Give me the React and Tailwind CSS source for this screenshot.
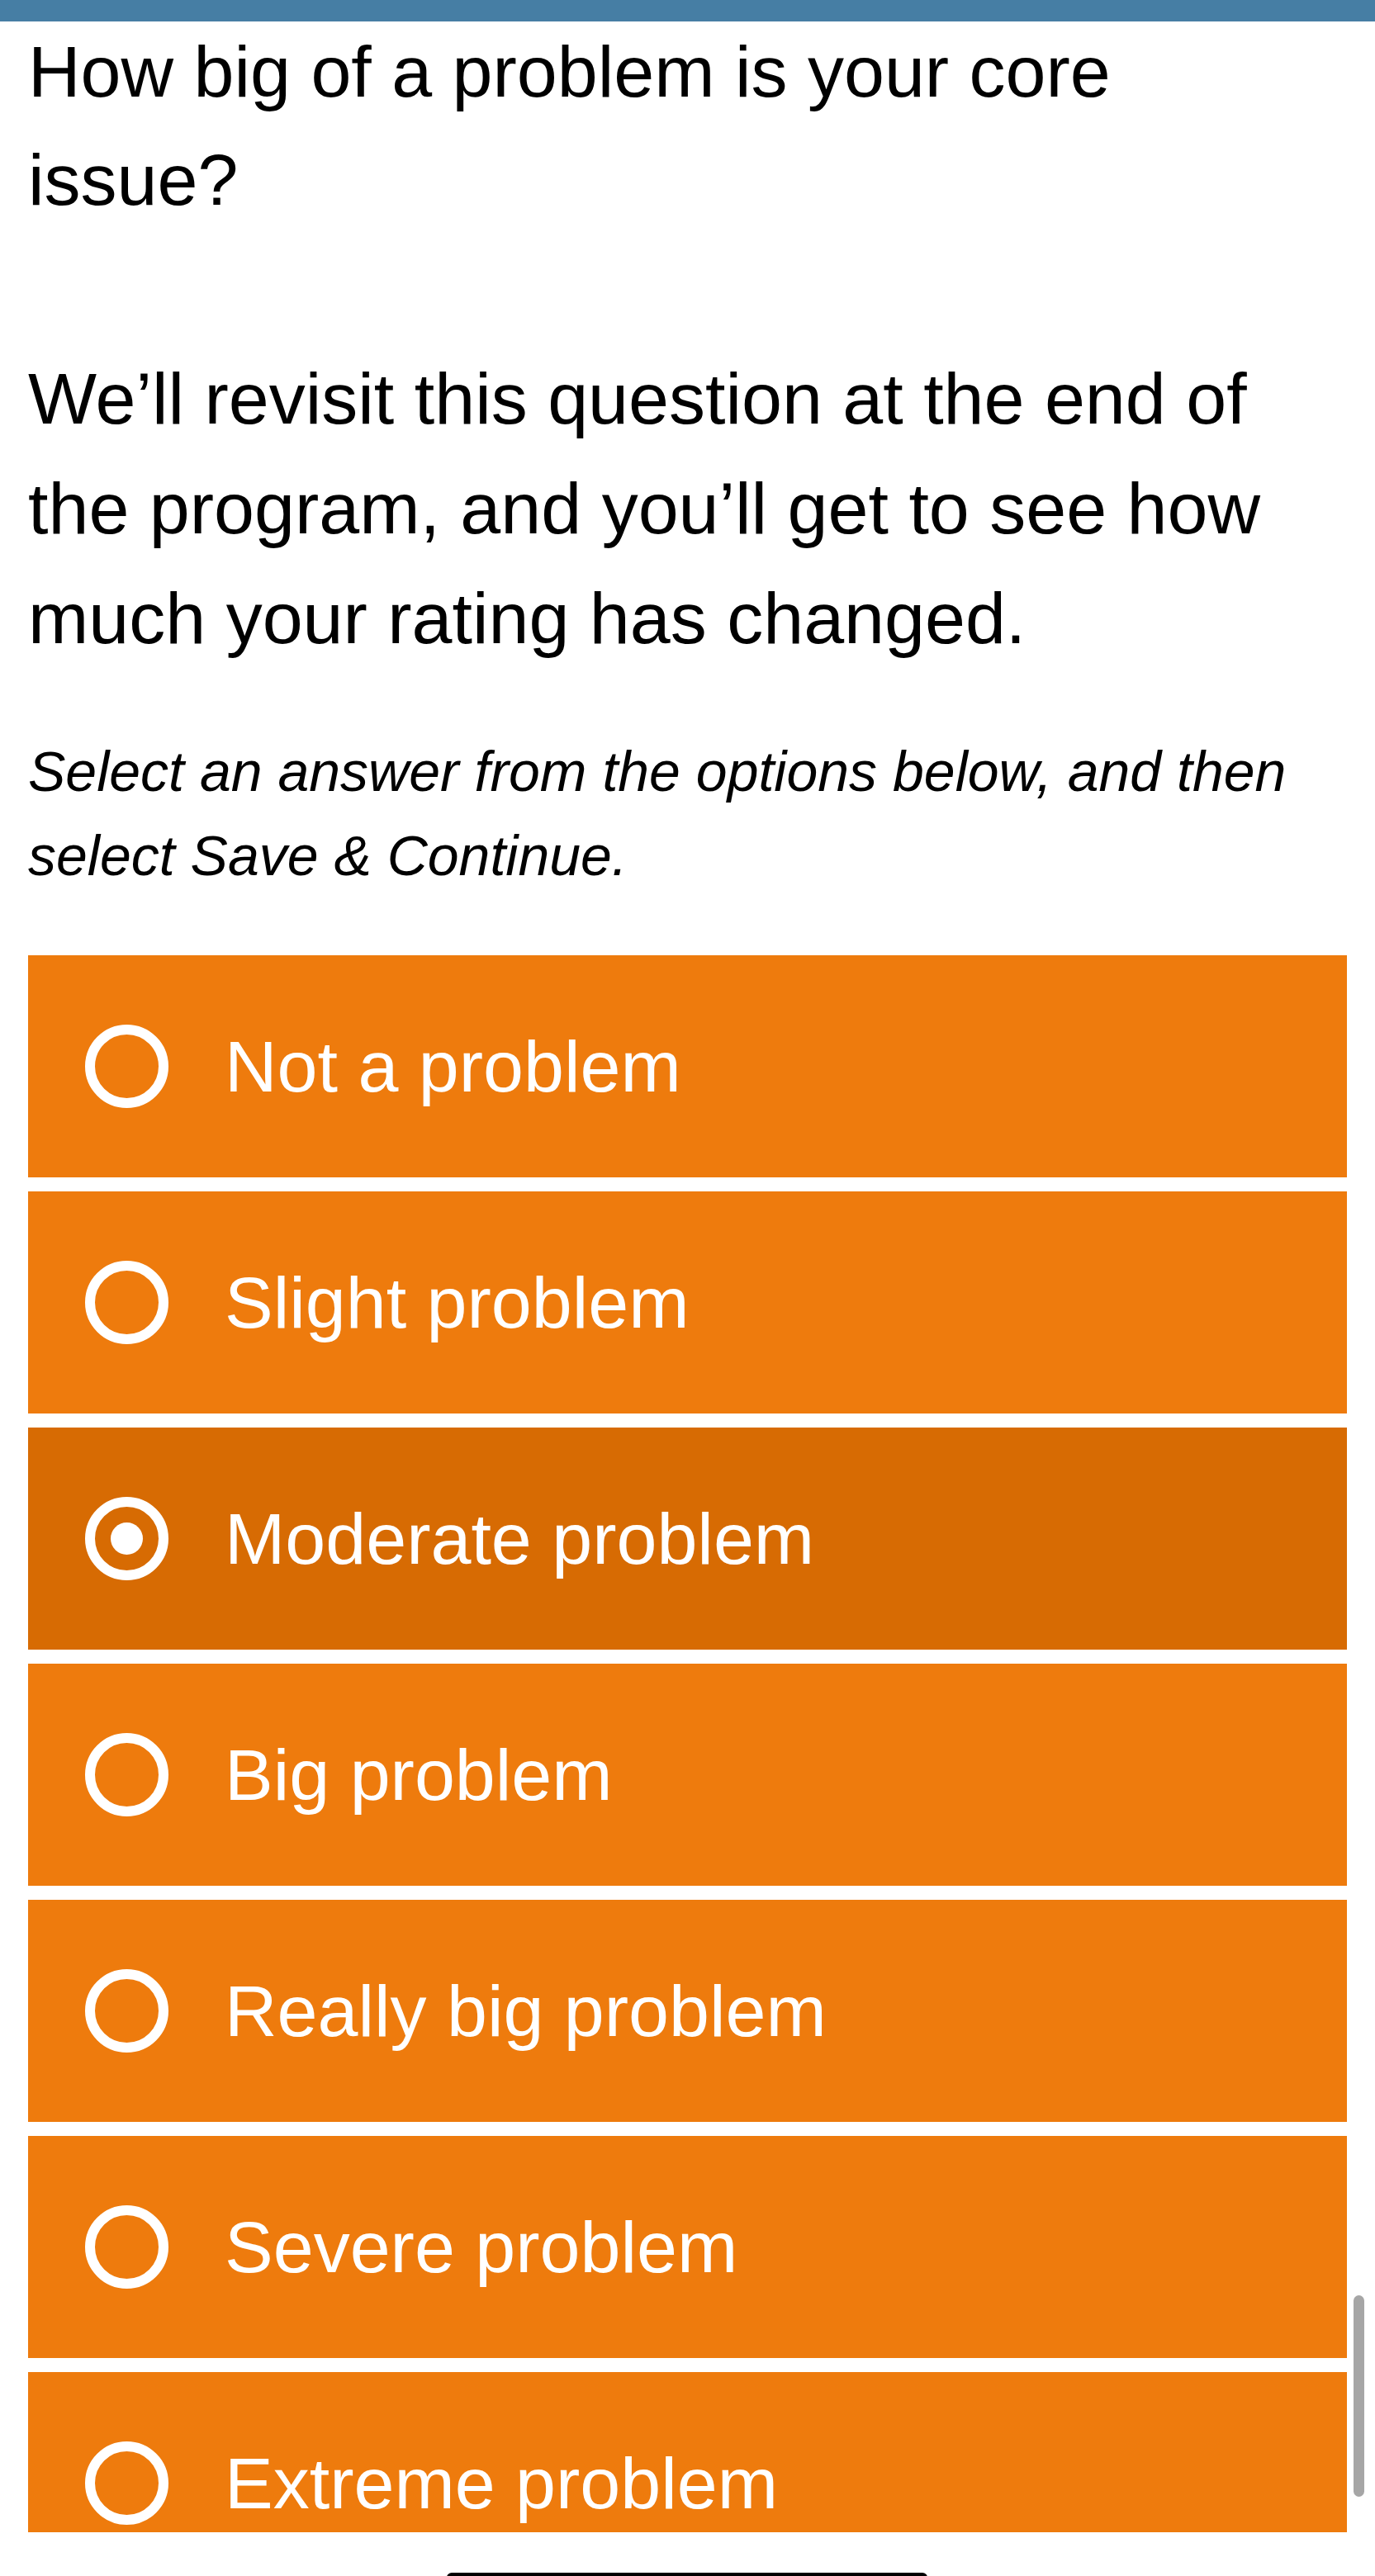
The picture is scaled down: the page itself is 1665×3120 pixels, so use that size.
import React from "react";

const options = [
  { label: "Not a problem", selected: false },
  { label: "Slight problem", selected: false },
  { label: "Moderate problem", selected: true },
  { label: "Big problem", selected: false },
  { label: "Really big problem", selected: false },
  { label: "Severe problem", selected: false },
  { label: "Extreme problem", selected: false },
];

function Radio({ selected }) {
  return (
    <div className="w-[101px] h-[101px] shrink-0 rounded-full border-[12px] border-white flex items-center justify-center">
      {selected && <div className="w-[39px] h-[39px] rounded-full bg-white" />}
    </div>
  );
}

export default function App() {
  return (
    <div
      className="relative w-[1665px] h-[3120px] overflow-hidden bg-white text-black"
      style={{ fontFamily: '"Liberation Sans", Arial, Helvetica, sans-serif' }}
    >
      <div className="h-[3067px] overflow-hidden flex flex-col">
        <div className="h-[26px] shrink-0 bg-[#467ea4] relative z-10" />
        <div className="px-[34px] flex flex-col">
          <h1 className="mt-[-5px] w-[1560px] text-[88px] leading-[131px] font-normal">
            How big of a problem is your core issue?
          </h1>
          <p className="mt-[133px] w-[1560px] text-[88px] leading-[133px]">
            We’ll revisit this question at the end of the program, and you’ll get to see how much your rating has changed.
          </p>
          <p className="mt-[68px] w-[1560px] text-[68px] leading-[102px] italic">
            Select an answer from the options below, and then select Save &amp; Continue.
          </p>
          <div className="mt-[70px] flex flex-col gap-[17px]">
            {options.map((o) => (
              <div
                key={o.label}
                className={
                  "h-[269px] shrink-0 flex items-center pl-[69px] gap-[68px] text-white " +
                  (o.selected ? "bg-[#d76b03]" : "bg-[#ee7b0d]")
                }
              >
                <Radio selected={o.selected} />
                <span className="text-[88px] leading-[101px]">{o.label}</span>
              </div>
            ))}
          </div>
        </div>
      </div>
      <div className="absolute left-[1639px] top-[2780px] w-[13px] h-[244px] rounded-full bg-[#a6a6a6]" />
      <div className="absolute left-[541px] top-[3116px] w-[582px] h-[12px] rounded-full bg-black" />
    </div>
  );
}
